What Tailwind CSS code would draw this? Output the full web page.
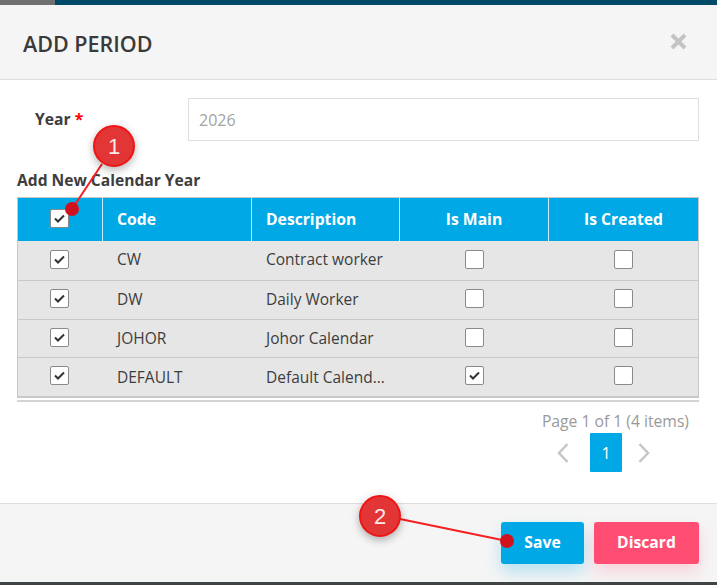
<!DOCTYPE html>
<html>
<head>
<meta charset="utf-8">
<script src="https://cdn.jsdelivr.net/npm/@tailwindcss/browser@4"></script>
</head>
<body class="bg-white overflow-hidden">
<div class="relative w-[717px] h-[585px] overflow-hidden flex flex-col font-['Open_Sans',sans-serif] text-[#3d3d3d]">
  <div class="h-[5px] flex shrink-0">
    <div class="w-[55px] bg-[#6f6f6f]"></div>
    <div class="flex-1 bg-[#004a69]"></div>
  </div>
  <header class="h-[75px] shrink-0 bg-[#f5f5f5] border-b border-[#dedede] flex items-center justify-between pl-[23px] pr-[30px]">
    <h2 class="text-[21.5px] font-semibold leading-none text-[#3a3a3a] pt-[4px]">ADD PERIOD</h2>
    <svg class="w-[17px] h-[17px] mb-[1px]" viewBox="0 0 17 17"><path d="M2 2L15 15M15 2L2 15" stroke="#c4c4c4" stroke-width="4"/></svg>
  </header>
  <main class="flex-1 bg-white flex flex-col pl-[17px] pr-[18px]">
    <div class="flex items-center mt-[18px] h-[43px]">
      <label class="w-[171px] pl-[18px] text-[15.7px] font-bold text-[#3d3d3d]">Year <span class="text-[#f00]">*</span></label>
      <div class="flex-1 h-full border border-[#dedede] flex items-center pl-[10px] text-[16px] text-[#a3a3a3]">2026</div>
    </div>
    <div class="mt-[29px] text-[15.6px] font-bold leading-[20px] text-[#3d3d3d]">Add New Calendar Year</div>
    <div class="mt-[7px] border border-[#c8c8c8] border-b-[2px] bg-[#e6e6e6]">
      <div class="grid grid-cols-[85px_149px_148px_149px_1fr] h-[43px] bg-[#00a9e6] text-white text-[15.7px] font-bold">
        <div class="flex items-center justify-center border-r border-white/80 pr-[2px]">
          <span class="w-[19px] h-[19px] mb-[2px] border border-[#8a8a8a] rounded-[2px] bg-white flex items-center justify-center"><svg class="w-[11px] h-[9px]" viewBox="0 0 11 9"><path d="M1 4.5L4 7.5L10 1.5" fill="none" stroke="#333" stroke-width="2"/></svg></span>
        </div>
        <div class="flex items-center pl-[14px] border-r border-white/80">Code</div>
        <div class="flex items-center pl-[14px] border-r border-white/80">Description</div>
        <div class="flex items-center justify-center border-r border-white/80">Is Main</div>
        <div class="flex items-center justify-center">Is Created</div>
      </div>
      <div class="grid grid-cols-[85px_149px_148px_149px_1fr] h-[40px] text-[15.5px] border-b border-[#c8c8c8] items-center">
        <div class="flex justify-center pr-[2px] pb-[3px]"><span class="w-[19px] h-[19px] border border-[#8a8a8a] rounded-[2px] bg-white flex items-center justify-center"><svg class="w-[11px] h-[9px]" viewBox="0 0 11 9"><path d="M1 4.5L4 7.5L10 1.5" fill="none" stroke="#333" stroke-width="2"/></svg></span></div>
        <div class="pl-[14px] pb-[1px]">CW</div>
        <div class="pl-[14px] pb-[1px]">Contract worker</div>
        <div class="flex justify-center pb-[3px]"><span class="w-[19px] h-[19px] border border-[#8a8a8a] rounded-[2px] bg-white"></span></div>
        <div class="flex justify-center pb-[3px]"><span class="w-[19px] h-[19px] border border-[#8a8a8a] rounded-[2px] bg-white"></span></div>
      </div>
      <div class="grid grid-cols-[85px_149px_148px_149px_1fr] h-[39px] text-[15.5px] border-b border-[#c8c8c8] items-center">
        <div class="flex justify-center pr-[2px] pb-[4px]"><span class="w-[19px] h-[19px] border border-[#8a8a8a] rounded-[2px] bg-white flex items-center justify-center"><svg class="w-[11px] h-[9px]" viewBox="0 0 11 9"><path d="M1 4.5L4 7.5L10 1.5" fill="none" stroke="#333" stroke-width="2"/></svg></span></div>
        <div class="pl-[14px] pb-[1px]">DW</div>
        <div class="pl-[14px] pb-[1px]">Daily Worker</div>
        <div class="flex justify-center pb-[4px]"><span class="w-[19px] h-[19px] border border-[#8a8a8a] rounded-[2px] bg-white"></span></div>
        <div class="flex justify-center pb-[4px]"><span class="w-[19px] h-[19px] border border-[#8a8a8a] rounded-[2px] bg-white"></span></div>
      </div>
      <div class="grid grid-cols-[85px_149px_148px_149px_1fr] h-[38px] text-[15.5px] border-b border-[#c8c8c8] items-center">
        <div class="flex justify-center pr-[2px] pb-[3px]"><span class="w-[19px] h-[19px] border border-[#8a8a8a] rounded-[2px] bg-white flex items-center justify-center"><svg class="w-[11px] h-[9px]" viewBox="0 0 11 9"><path d="M1 4.5L4 7.5L10 1.5" fill="none" stroke="#333" stroke-width="2"/></svg></span></div>
        <div class="pl-[14px]">JOHOR</div>
        <div class="pl-[14px]">Johor Calendar</div>
        <div class="flex justify-center pb-[3px]"><span class="w-[19px] h-[19px] border border-[#8a8a8a] rounded-[2px] bg-white"></span></div>
        <div class="flex justify-center pb-[3px]"><span class="w-[19px] h-[19px] border border-[#8a8a8a] rounded-[2px] bg-white"></span></div>
      </div>
      <div class="grid grid-cols-[85px_149px_148px_149px_1fr] h-[38px] text-[15.5px] items-center">
        <div class="flex justify-center pr-[2px] pb-[3px]"><span class="w-[19px] h-[19px] border border-[#8a8a8a] rounded-[2px] bg-white flex items-center justify-center"><svg class="w-[11px] h-[9px]" viewBox="0 0 11 9"><path d="M1 4.5L4 7.5L10 1.5" fill="none" stroke="#333" stroke-width="2"/></svg></span></div>
        <div class="pl-[14px] pt-[2px]">DEFAULT</div>
        <div class="pl-[14px] pt-[2px]">Default Calend...</div>
        <div class="flex justify-center pb-[3px]"><span class="w-[19px] h-[19px] border border-[#8a8a8a] rounded-[2px] bg-white flex items-center justify-center"><svg class="w-[11px] h-[9px]" viewBox="0 0 11 9"><path d="M1 4.5L4 7.5L10 1.5" fill="none" stroke="#333" stroke-width="2"/></svg></span></div>
        <div class="flex justify-center pb-[3px]"><span class="w-[19px] h-[19px] border border-[#8a8a8a] rounded-[2px] bg-white"></span></div>
      </div>
    </div>
    <div class="h-[2px] mt-[2px] bg-[#d4d4d4]"></div>
    <div class="text-right pr-[10px] mt-[8px] text-[15.7px] leading-[22px] text-[#999]">Page 1 of 1 (4 items)</div>
    <div class="flex justify-end items-center pr-[49px] mt-[1px] h-[39px]">
      <svg class="w-[12px] h-[20px] mr-[21px]" viewBox="0 0 12 20"><path d="M10.5 1L2 10L10.5 19" fill="none" stroke="#c6c6c6" stroke-width="2.5"/></svg>
      <div class="w-[32px] h-[39px] bg-[#00a9e6] rounded-[1px] text-white text-[16px] font-medium flex items-center justify-center">1</div>
      <svg class="w-[12px] h-[20px] ml-[16px]" viewBox="0 0 12 20"><path d="M1.5 1L10 10L1.5 19" fill="none" stroke="#c6c6c6" stroke-width="2.5"/></svg>
    </div>
  </main>
  <footer class="h-[79px] shrink-0 bg-[#f5f5f5] border-t border-[#dedede] flex justify-end gap-[10px] pt-[18px] pr-[18px]">
    <button class="w-[83px] h-[42px] rounded-[3px] bg-[#00a9e6] text-white text-[15.7px] font-bold shadow-[0_8px_16px_rgba(0,169,230,0.25)]">Save</button>
    <button class="w-[105px] h-[42px] rounded-[3px] bg-[#ff4d73] text-white text-[15.7px] font-bold shadow-[0_8px_16px_rgba(255,77,115,0.2)]">Discard</button>
  </footer>
  <div class="h-[3px] shrink-0 bg-[#3f4447]"></div>

  <svg class="absolute inset-0 w-[717px] h-[585px] pointer-events-none" viewBox="0 0 717 585">
    <line x1="102" y1="164" x2="72" y2="209" stroke="#f52020" stroke-width="2"/>
    <circle cx="72" cy="209" r="7" fill="#d0121f"/>
    <line x1="400" y1="519" x2="507" y2="541" stroke="#f52020" stroke-width="2"/>
    <circle cx="507" cy="541" r="7" fill="#d0121f"/>
  </svg>
  <div class="absolute left-[93px] top-[125px] w-[42px] h-[42px] rounded-full bg-[#e23636] border-2 border-[#f01414] shadow-[0_3px_8px_rgba(0,0,0,0.3)] flex items-center justify-center text-[#fbe9e9] text-[22px] font-['Liberation_Sans',sans-serif]">1</div>
  <div class="absolute left-[359px] top-[495px] w-[42px] h-[42px] rounded-full bg-[#e23636] border-2 border-[#f01414] shadow-[0_3px_8px_rgba(0,0,0,0.3)] flex items-center justify-center text-[#fbe9e9] text-[22px] font-['Liberation_Sans',sans-serif]">2</div>
</div>
</body>
</html>
